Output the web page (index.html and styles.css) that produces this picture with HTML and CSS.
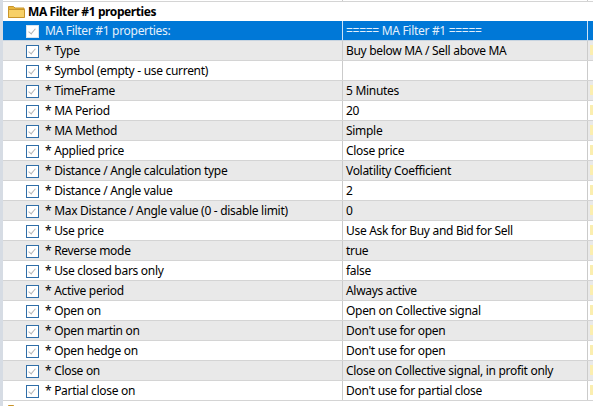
FILE: index.html
```html
<!DOCTYPE html>
<html lang="en">
<head>
  <meta charset="UTF-8">
  <title>MA Filter #1 properties</title>
  <link rel="stylesheet" href="styles.css">
</head>
<body>

  <div class="tree">
    <div class="row stub"><div class="name"></div><div class="value"></div><div class="extra"></div></div>

    <div class="group">
      <svg class="folder" width="17" height="13" viewBox="0 0 17 13">
        <path d="M0.5 1.5 h5 l1.5 1.5 h9 v9.5 h-15.5 z" fill="#e8b53c" stroke="#c9952a"/>
        <path d="M0.5 4.5 h16 v8 h-16 z" fill="#f7d067" stroke="#c9952a"/>
      </svg>
      <span>MA Filter #1 properties</span>
    </div>

    <div class="row selected">
      <div class="name"><span class="check"></span>MA Filter #1 properties:</div>
      <div class="value">===== MA Filter #1 =====</div>
      <div class="extra"></div>
    </div>
    <div class="row">
      <div class="name"><span class="check"></span>* Type</div>
      <div class="value">Buy below MA / Sell above MA</div>
      <div class="extra"><i></i></div>
    </div>
    <div class="row">
      <div class="name"><span class="check"></span>* Symbol (empty - use current)</div>
      <div class="value"></div>
      <div class="extra"></div>
    </div>
    <div class="row">
      <div class="name"><span class="check"></span>* TimeFrame</div>
      <div class="value">5 Minutes</div>
      <div class="extra"><i></i></div>
    </div>
    <div class="row">
      <div class="name"><span class="check"></span>* MA Period</div>
      <div class="value">20</div>
      <div class="extra"><i></i></div>
    </div>
    <div class="row">
      <div class="name"><span class="check"></span>* MA Method</div>
      <div class="value">Simple</div>
      <div class="extra"><i></i></div>
    </div>
    <div class="row">
      <div class="name"><span class="check"></span>* Applied price</div>
      <div class="value">Close price</div>
      <div class="extra"><i></i></div>
    </div>
    <div class="row">
      <div class="name"><span class="check"></span>* Distance / Angle calculation type</div>
      <div class="value">Volatility Coefficient</div>
      <div class="extra"><i></i></div>
    </div>
    <div class="row">
      <div class="name"><span class="check"></span>* Distance / Angle value</div>
      <div class="value">2</div>
      <div class="extra"><i></i></div>
    </div>
    <div class="row">
      <div class="name"><span class="check"></span>* Max Distance / Angle value (0 - disable limit)</div>
      <div class="value">0</div>
      <div class="extra"><i></i></div>
    </div>
    <div class="row">
      <div class="name"><span class="check"></span>* Use price</div>
      <div class="value">Use Ask for Buy and Bid for Sell</div>
      <div class="extra"><i></i></div>
    </div>
    <div class="row">
      <div class="name"><span class="check"></span>* Reverse mode</div>
      <div class="value">true</div>
      <div class="extra"><i></i></div>
    </div>
    <div class="row">
      <div class="name"><span class="check"></span>* Use closed bars only</div>
      <div class="value">false</div>
      <div class="extra"><i></i></div>
    </div>
    <div class="row">
      <div class="name"><span class="check"></span>* Active period</div>
      <div class="value">Always active</div>
      <div class="extra"><i></i></div>
    </div>
    <div class="row">
      <div class="name"><span class="check"></span>* Open on</div>
      <div class="value">Open on Collective signal</div>
      <div class="extra"><i></i></div>
    </div>
    <div class="row">
      <div class="name"><span class="check"></span>* Open martin on</div>
      <div class="value">Don't use for open</div>
      <div class="extra"><i></i></div>
    </div>
    <div class="row">
      <div class="name"><span class="check"></span>* Open hedge on</div>
      <div class="value">Don't use for open</div>
      <div class="extra"><i></i></div>
    </div>
    <div class="row">
      <div class="name"><span class="check"></span>* Close on</div>
      <div class="value">Close on Collective signal, in profit only</div>
      <div class="extra"><i></i></div>
    </div>
    <div class="row">
      <div class="name"><span class="check"></span>* Partial close on</div>
      <div class="value">Don't use for partial close</div>
      <div class="extra"><i></i></div>
    </div>

    <div class="group">
      <svg class="folder" width="17" height="13" viewBox="0 0 17 13">
        <path d="M0.5 1.5 h5 l1.5 1.5 h9 v9.5 h-15.5 z" fill="#e8b53c" stroke="#c9952a"/>
        <path d="M0.5 4.5 h16 v8 h-16 z" fill="#f7d067" stroke="#c9952a"/>
      </svg>
      <span></span>
    </div>
  </div>

</body>
</html>
```

FILE: styles.css
```css
body {
  margin: 0;
  width: 593px;
  height: 406px;
  overflow: hidden;
  background: #fff;
  font-family: "Noto Sans", "Liberation Sans", sans-serif;
  font-size: 12px;
  letter-spacing: -0.3px;
  color: #000;
}

.tree {
  border-left: 3px solid #d6dce4;
  width: 590px;
  overflow: hidden;
}

.row {
  display: grid;
  grid-template-columns: 340px 245px 20px;
  height: 19px;
  border-bottom: 1px solid #d4d4d4;
  line-height: 18px;
  white-space: nowrap;
}

.row:nth-of-type(even) {
  background: #e9e9e9;
}

.stub {
  height: 1px;
}

.name {
  display: flex;
  align-items: center;
  padding: 1px 0 0 23px;
  border-right: 1px solid #cbcbcb;
  overflow: hidden;
}

.value {
  padding: 1px 0 0 3px;
  border-right: 1px solid #cbcbcb;
  overflow: hidden;
}

.stub .name,
.stub .value {
  padding-top: 0;
}

.extra {
  position: relative;
}

.extra i {
  position: absolute;
  left: 2px;
  top: 4px;
  width: 3px;
  height: 10px;
  background: #fbeeb0;
}

.check {
  position: relative;
  flex: none;
  width: 11px;
  height: 11px;
  border: 1px solid #2f6ea8;
  background: #fff;
  margin-right: 6px;
}

.check::after {
  content: "";
  position: absolute;
  left: 3px;
  top: 1px;
  width: 3px;
  height: 6px;
  border-right: 1px solid #b4b4b4;
  border-bottom: 1px solid #b4b4b4;
  transform: rotate(40deg);
}

.selected {
  background: #0078d7 !important;
  color: #e4f0fb;
  border-bottom-color: #c8d4e0;
}

.selected .name,
.selected .value {
  border-right-color: #cfe3f5;
}

.selected .check {
  border-color: #d8e4ee;
}

.group {
  display: flex;
  align-items: center;
  height: 19px;
  padding-left: 5px;
  font-weight: bold;
  letter-spacing: -0.4px;
}

.folder {
  margin-right: 3px;
}
```
